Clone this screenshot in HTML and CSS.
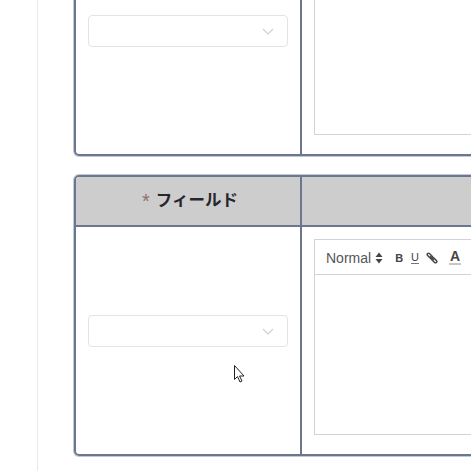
FILE: index.html
```html
<!DOCTYPE html>
<html lang="ja">
<head>
<meta charset="utf-8">
<title>フィールド</title>
<link rel="stylesheet" href="styles.css">
</head>
<body>
<div class="page">
  <div class="content">
    <section class="card">
      <div class="head"><div class="head-cell head-left"></div><div class="head-cell"></div></div>
      <div class="row">
        <div class="cell-left">
          <div class="select"><svg class="chev" viewBox="0 0 12 7" width="12" height="7"><path d="M1 1l5 5 5-5" fill="none" stroke="#cfcfd4" stroke-width="1.1"/></svg></div>
        </div>
        <div class="cell-right">
          <div class="editor">
            <div class="toolbar"></div>
            <div class="edit-area"></div>
          </div>
        </div>
      </div>
    </section>
    <section class="card">
      <div class="head"><div class="head-cell head-left"><span class="star">*</span><span class="title">フィールド</span></div><div class="head-cell"></div></div>
      <div class="row">
        <div class="cell-left">
          <div class="select"><svg class="chev" viewBox="0 0 12 7" width="12" height="7"><path d="M1 1l5 5 5-5" fill="none" stroke="#cfcfd4" stroke-width="1.1"/></svg></div>
          <svg class="cursor" viewBox="0 0 14 20" width="14" height="20"><path d="M1.500 1.500v14l3-3 2.500 5.500 2-1-2.500-5h4.500z" fill="#fff" stroke="#222" stroke-width="1"/></svg>
        </div>
        <div class="cell-right">
          <div class="editor">
            <div class="toolbar">
              <span class="normal">Normal</span>
              <svg class="updown" viewBox="0 0 8 12" width="8" height="12"><path d="M4 .5l3.500 4.500H.5zM4 11.500l3.500-4.500H.5z" fill="#444"/></svg>
              <span class="tool bold">B</span>
              <span class="tool under">U</span>
              <svg class="link" viewBox="0 0 12 12" width="12" height="12"><g fill="none" stroke-linecap="round"><path d="M2.500 2.500L5.500 5.500M6.500 6.500L9.500 9.500" stroke="#444" stroke-width="4"/><path d="M2.500 2.500L5.500 5.500M6.500 6.500L9.500 9.500" stroke="#eee" stroke-width="1.200"/><path d="M4.500 4.500L7.500 7.500" stroke="#444" stroke-width="1.600"/></g></svg>
              <span class="tool color">A</span>
            </div>
            <div class="edit-area"></div>
          </div>
        </div>
      </div>
    </section>
  </div>
</div>
</body>
</html>
```
FILE: styles.css
```css
html, body {
  margin: 0;
  height: 100%;
  overflow: hidden;
  background: #fff;
  font-family: "Liberation Sans", "Noto Sans CJK JP", sans-serif;
}
.page {
  width: 700px;
  height: 471px;
  margin-left: 37px;
  padding-left: 36px;
  border-left: 1px solid #e9e9e9;
  box-sizing: border-box;
  overflow: hidden;
}
.content {
  margin-top: -125px;
  display: flex;
  flex-direction: column;
  gap: 19px;
}
.card {
  width: 620px;
  height: 281px;
  box-sizing: border-box;
  border: 2px solid #6b7690;
  border-radius: 5px;
  box-shadow: 0 0 0 1px rgba(107, 118, 144, 0.4);
  display: flex;
  flex-direction: column;
  overflow: hidden;
}
.head {
  height: 48px;
  display: flex;
  background: #cccdcc;
  border-bottom: 2px solid #6b7690;
  flex: none;
}
.head-cell {
  flex: 1;
  display: flex;
  align-items: center;
  justify-content: center;
  gap: 6px;
  padding-bottom: 5px;
}
.head-left {
  flex: none;
  width: 220px;
  border-right: 2px solid #6b7690;
  padding-left: 4px;
}
.star { color: #95706a; font-size: 20px; line-height: 20px; margin-top: 4px; }
.title { color: #26262c; font-size: 16.500px; font-weight: 700; font-family: "Noto Sans CJK JP", sans-serif; }
.row { flex: 1; display: flex; min-height: 0; }
.cell-left {
  position: relative;
  flex: none;
  width: 200px;
  border-right: 2px solid #6b7690;
  display: flex;
  align-items: flex-start;
  padding: 88px 12px 0;
}
.select {
  flex: 1;
  height: 30px;
  border: 1px solid #e4e4e8;
  border-radius: 4px;
  display: flex;
  align-items: center;
  justify-content: flex-end;
  padding-right: 13px;
}
.cursor { position: absolute; left: 157px; top: 137px; }
.cell-right { flex: 1; padding: 12px; }
.editor {
  height: 194px;
  border: 1px solid #d2d2d8;
  display: flex;
  flex-direction: column;
}
.toolbar {
  height: 33px;
  padding: 1px 0 0 11px;
  border-bottom: 1px solid #d2d2d8;
  display: flex;
  align-items: center;
  color: #444;
  flex: none;
}
.normal { font-size: 14px; color: #55555a; }
.updown { margin-left: 4px; }
.tool { font-size: 11px; font-weight: 700; color: #444; }
.bold { margin-left: 12px; }
.under { margin-left: 8px; font-weight: 400; border-bottom: 1px solid #6b7690; line-height: 11px; }
.link { margin-left: 7px; }
.color { margin-left: 11px; font-size: 14px; border-bottom: 2px solid #c8c8c0; line-height: 13px; padding: 0 1px; }
.edit-area { flex: 1; }
```
